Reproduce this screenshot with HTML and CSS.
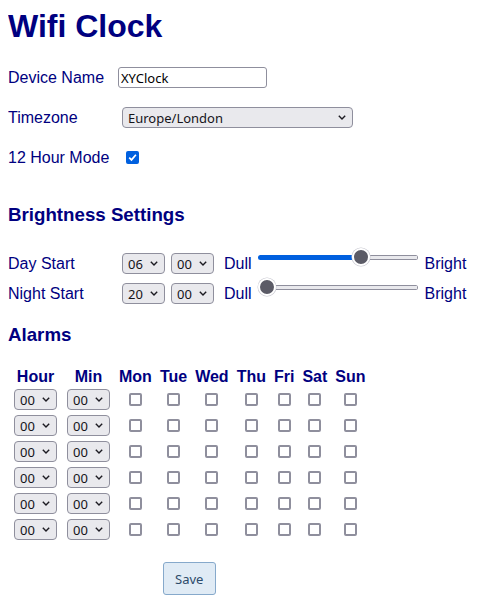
FILE: index.html
```html
<!DOCTYPE html>
<html lang="en">
<head>
<meta charset="utf-8">
<title>Wifi Clock</title>
<link rel="stylesheet" href="styles.css">
</head>
<body>
<h1 class="title">Wifi Clock</h1>

<div class="row first">
  <label class="label" for="name">Device Name</label>
  <input class="text-input" id="name" type="text" value="XYClock">
</div>
<div class="row">
  <label class="label" for="tz">Timezone</label>
  <select class="select tz-select" id="tz">
    <option>Europe/London</option>
    <option>Europe/Paris</option>
    <option>America/New_York</option>
  </select>
</div>
<div class="row">
  <label class="label" for="h12">12 Hour Mode</label>
  <input class="check mode-check" id="h12" type="checkbox" checked>
</div>

<h3 class="section">Brightness Settings</h3>

<div class="bright-row first-bright">
  <span class="blabel">Day Start</span>
  <select class="select small"><option>06</option><option>07</option></select>
  <select class="select small second"><option>00</option><option>30</option></select>
  <span class="dull">Dull</span>
  <input class="slider" type="range" min="0" max="15" value="10" style="--fill:104px">
  <span class="bright">Bright</span>
</div>
<div class="bright-row">
  <span class="blabel">Night Start</span>
  <select class="select small"><option>20</option><option>21</option></select>
  <select class="select small second"><option>00</option><option>30</option></select>
  <span class="dull">Dull</span>
  <input class="slider" type="range" min="0" max="15" value="0" style="--fill:0px">
  <span class="bright">Bright</span>
</div>

<h3 class="section alarms-title">Alarms</h3>

<table class="alarms">
  <thead>
    <tr><th>Hour</th><th>Min</th><th>Mon</th><th>Tue</th><th>Wed</th><th>Thu</th><th>Fri</th><th>Sat</th><th>Sun</th></tr>
  </thead>
  <tbody>
    <tr><td><select class="select small"><option>00</option></select></td><td><select class="select small"><option>00</option></select></td><td><input class="check" type="checkbox"></td><td><input class="check" type="checkbox"></td><td><input class="check" type="checkbox"></td><td><input class="check" type="checkbox"></td><td><input class="check" type="checkbox"></td><td><input class="check" type="checkbox"></td><td><input class="check" type="checkbox"></td></tr>
    <tr><td><select class="select small"><option>00</option></select></td><td><select class="select small"><option>00</option></select></td><td><input class="check" type="checkbox"></td><td><input class="check" type="checkbox"></td><td><input class="check" type="checkbox"></td><td><input class="check" type="checkbox"></td><td><input class="check" type="checkbox"></td><td><input class="check" type="checkbox"></td><td><input class="check" type="checkbox"></td></tr>
    <tr><td><select class="select small"><option>00</option></select></td><td><select class="select small"><option>00</option></select></td><td><input class="check" type="checkbox"></td><td><input class="check" type="checkbox"></td><td><input class="check" type="checkbox"></td><td><input class="check" type="checkbox"></td><td><input class="check" type="checkbox"></td><td><input class="check" type="checkbox"></td><td><input class="check" type="checkbox"></td></tr>
    <tr><td><select class="select small"><option>00</option></select></td><td><select class="select small"><option>00</option></select></td><td><input class="check" type="checkbox"></td><td><input class="check" type="checkbox"></td><td><input class="check" type="checkbox"></td><td><input class="check" type="checkbox"></td><td><input class="check" type="checkbox"></td><td><input class="check" type="checkbox"></td><td><input class="check" type="checkbox"></td></tr>
    <tr><td><select class="select small"><option>00</option></select></td><td><select class="select small"><option>00</option></select></td><td><input class="check" type="checkbox"></td><td><input class="check" type="checkbox"></td><td><input class="check" type="checkbox"></td><td><input class="check" type="checkbox"></td><td><input class="check" type="checkbox"></td><td><input class="check" type="checkbox"></td><td><input class="check" type="checkbox"></td></tr>
    <tr><td><select class="select small"><option>00</option></select></td><td><select class="select small"><option>00</option></select></td><td><input class="check" type="checkbox"></td><td><input class="check" type="checkbox"></td><td><input class="check" type="checkbox"></td><td><input class="check" type="checkbox"></td><td><input class="check" type="checkbox"></td><td><input class="check" type="checkbox"></td><td><input class="check" type="checkbox"></td></tr>
  </tbody>
  <tfoot>
    <tr><td class="save-cell" colspan="9"><button class="save" type="button">Save</button></td></tr>
  </tfoot>
</table>
</body>
</html>
```
FILE: styles.css
```css
body {
  margin: 8px;
  font-family: "Liberation Sans", Arial, sans-serif;
  font-size: 16px;
  color: #000080;
  background: #fff;
}

.title {
  margin: 0;
  font-size: 32px;
  line-height: 37px;
  font-weight: bold;
}

.row {
  display: flex;
  align-items: center;
  height: 21px;
  margin-top: 19px;
}
.row.first { margin-top: 22px; }

.label { width: 110px; flex: none; }

.text-input {
  box-sizing: border-box;
  width: 149px;
  height: 21px;
  margin: 0;
  padding: 0 2px;
  border: 1px solid #8f8f9d;
  border-radius: 3px;
  font-family: "Noto Sans", sans-serif;
  font-size: 13px;
  color: #000;
  background: #fff;
}

.select {
  -webkit-appearance: none;
  appearance: none;
  box-sizing: border-box;
  height: 21px;
  margin: 0;
  padding: 0 18px 0 5px;
  border: 1px solid #8f8f9d;
  border-radius: 4px;
  background-color: #e9e9ed;
  background-image: url("data:image/svg+xml,%3Csvg xmlns='http://www.w3.org/2000/svg' width='8' height='5' viewBox='0 0 8 5'%3E%3Cpath d='M0.8 0.8L4 4L7.2 0.8' fill='none' stroke='%231c1b22' stroke-width='1.4'/%3E%3C/svg%3E");
  background-repeat: no-repeat;
  background-position: right 6px center;
  font-family: "Noto Sans", sans-serif;
  font-size: 13px;
  color: #15141a;
}
.tz-select { width: 231px; margin-left: 4px; }
.select.small { width: 43px; }
.select.second { margin-left: 6px; }

.check {
  -webkit-appearance: none;
  appearance: none;
  box-sizing: border-box;
  width: 13px;
  height: 13px;
  margin: 0;
  border: 2px solid #8f8f9d;
  border-radius: 2px;
  background: #fff;
}
.check:checked {
  border-color: #0060df;
  background-color: #0060df;
  background-image: url("data:image/svg+xml,%3Csvg xmlns='http://www.w3.org/2000/svg' width='9' height='9' viewBox='0 0 9 9'%3E%3Cpath d='M1.2 4.6L3.5 6.9L7.9 1.8' fill='none' stroke='%23fff' stroke-width='1.7'/%3E%3C/svg%3E");
  background-repeat: no-repeat;
  background-position: center;
}
.mode-check { margin-left: 8px; }

.section {
  margin: 36px 0 0;
  font-size: 18.72px;
  line-height: 22px;
  font-weight: bold;
}
.alarms-title { margin-top: 20px; }

.bright-row {
  display: flex;
  align-items: center;
  height: 21px;
  margin-top: 9px;
}
.bright-row.first-bright { margin-top: 27px; }
.blabel { width: 114px; flex: none; }
.dull { margin-left: 10px; }
.bright { margin-left: 7px; }

.slider {
  -webkit-appearance: none;
  appearance: none;
  align-self: flex-start;
  width: 160px;
  height: 18px;
  margin: -5px 0 0 6px;
  padding: 0;
  background: transparent;
}
.slider::-webkit-slider-runnable-track {
  height: 5px;
  border-radius: 3px;
  background:
    linear-gradient(#0060df, #0060df) left center / var(--fill) 100% no-repeat,
    linear-gradient(#e9e9ed, #e9e9ed) center / calc(100% - 2px) calc(100% - 2px) no-repeat,
    #8f8f9d;
}
.slider::-webkit-slider-thumb {
  -webkit-appearance: none;
  appearance: none;
  box-sizing: border-box;
  width: 18px;
  height: 18px;
  margin-top: -6.5px;
  border-radius: 50%;
  border: 2px solid #fff;
  background: #5b5b66;
  box-shadow: 0 0 0 0.5px #c8c8d0;
}

.alarms {
  margin-top: 19px;
  border-collapse: separate;
  border-spacing: 2px 3px;
}
.alarms th {
  padding: 0 3px;
  line-height: 18px;
  font-weight: bold;
  text-align: center;
}
.alarms td {
  padding: 0 3px 2px;
  text-align: center;
  vertical-align: middle;
}
.alarms td .select {
  display: block;
  margin: 0 1px;
}
.alarms td .check {
  display: block;
  margin: 0 auto;
}
.alarms td.save-cell {
  padding: 17px 0 0;
}

.save {
  box-sizing: border-box;
  width: 53px;
  height: 33px;
  margin: 0;
  padding: 0;
  border: 1px solid #86a9cb;
  border-radius: 3px;
  background: #e0ebf5;
  font-family: "Noto Sans", sans-serif;
  font-size: 13px;
  color: #2c4a6a;
}
```
